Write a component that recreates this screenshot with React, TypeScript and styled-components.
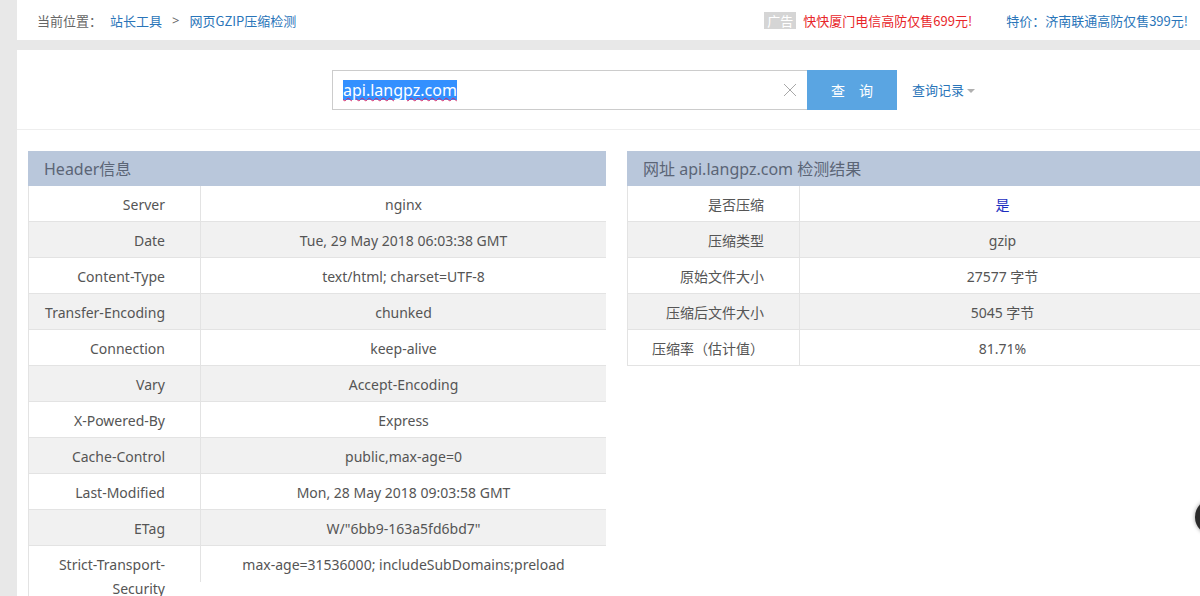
import React from "react";
import styled, { createGlobalStyle } from "styled-components";

const Global = createGlobalStyle`
  html, body { margin: 0; padding: 0; overflow: hidden; }
  body {
    background: #e8e8e8;
    font-family: "Noto Sans", "Noto Sans CJK SC", sans-serif;
    color: #555;
  }
`;

const Page = styled.div`
  padding-left: 17px;
  width: 1217px;
  height: 596px;
  box-sizing: border-box;
`;

const TopBar = styled.div`
  height: 40px;
  background: #fff;
  display: flex;
  align-items: center;
  padding: 0 29px 0 20px;
  font-size: 13px;
  font-family: "Noto Sans CJK SC", sans-serif;
`;

const Crumbs = styled.div`
  display: flex;
  align-items: center;
  flex: 1;
  color: #666;
`;

const CrumbLink = styled.a<{ $ml?: number }>`
  color: #2a75b9;
  text-decoration: none;
  margin-left: ${(p) => p.$ml ?? 0}px;
`;

const Sep = styled.span`
  color: #666;
  margin: 0 10px 0 10px;
  font-family: "Noto Sans", sans-serif;
`;

const Ads = styled.div`
  display: flex;
  align-items: center;
`;

const AdTag = styled.span`
  background: #d5d5d5;
  color: #fff;
  padding: 0 3px;
  line-height: 17px;
  margin-right: 7px;
`;

const AdLink = styled.a<{ $red?: boolean }>`
  color: ${(p) => (p.$red ? "#e8262a" : "#2a75b9")};
  text-decoration: none;
  margin-right: ${(p) => (p.$red ? 34 : 0)}px;
`;

const Main = styled.div`
  margin-top: 10px;
  background: #fff;
  height: 546px;
`;

const SearchArea = styled.div`
  height: 80px;
  border-bottom: 1px solid #eeeeee;
  display: flex;
  align-items: flex-start;
  padding: 20px 0 0 315px;
  box-sizing: border-box;
`;

const InputBox = styled.div`
  width: 475px;
  height: 40px;
  box-sizing: border-box;
  border: 1px solid #cccccc;
  border-right: none;
  display: flex;
  align-items: center;
  padding: 0 10px;
  font-size: 16px;
  font-family: "Noto Sans", "Noto Sans CJK SC", sans-serif;
`;

const Selected = styled.span`
  background: #3390ff;
  color: #fff;
  line-height: 20px;
  text-decoration: underline wavy #d0286a;
  text-decoration-thickness: 1px;
  text-underline-offset: 1px;
`;

const Spacer = styled.span`
  flex: 1;
`;

const SearchButton = styled.button`
  width: 90px;
  height: 40px;
  border: none;
  background: #5aa5e2;
  color: #fff;
  font-size: 14px;
  font-family: "Noto Sans CJK SC", sans-serif;
  letter-spacing: 14px;
  text-indent: 14px;
  padding: 0;
  cursor: pointer;
`;

const History = styled.a`
  margin-left: 15px;
  line-height: 40px;
  font-size: 13px;
  color: #2a75b9;
  font-family: "Noto Sans CJK SC", sans-serif;
  display: flex;
  align-items: center;
  gap: 3px;
  text-decoration: none;
`;

const Caret = styled.span`
  width: 0;
  height: 0;
  border-left: 4px solid transparent;
  border-right: 4px solid transparent;
  border-top: 4px solid #b0b0b0;
  margin-top: 1px;
`;

const Tables = styled.div`
  display: flex;
  align-items: flex-start;
  gap: 21px;
  padding: 21px 0 0 11px;
`;

const Panel = styled.div<{ $tail?: number }>`
  width: 578px;
  flex-shrink: 0;
  border-left: 1px solid #e3e3e3;
  box-sizing: border-box;
  padding-bottom: ${(p) => p.$tail ?? 0}px;
`;

const PanelHead = styled.div`
  height: 35px;
  margin-left: -1px;
  background: #b9c7db;
  color: #5b6576;
  font-size: 16px;
  line-height: 37px;
  padding-left: 16px;
  font-family: "Noto Sans", "Noto Sans CJK SC", sans-serif;
`;

const Row = styled.div<{ $alt: boolean; $last?: boolean }>`
  display: flex;
  height: 36px;
  box-sizing: border-box;
  border-bottom: ${(p) => (p.$last ? "none" : "1px solid #e3e3e3")};
  background: ${(p) => (p.$alt ? "#f1f1f1" : "#fff")};
  font-size: 14px;
  color: #555;
`;

const Key = styled.div`
  width: 172px;
  flex-shrink: 0;
  box-sizing: border-box;
  border-right: 1px solid #e3e3e3;
  text-align: right;
  padding: 7px 35px 0 10px;
  line-height: 24px;
  font-family: "Noto Sans", "Noto Sans CJK SC", sans-serif;
`;

const Val = styled.div<{ $blue?: boolean }>`
  flex: 1;
  text-align: center;
  padding-top: 7px;
  line-height: 24px;
  color: ${(p) => (p.$blue ? "#1c2ec0" : "#555")};
  font-family: "Noto Sans", "Noto Sans CJK SC", sans-serif;
`;

const Floater = styled.div`
  position: fixed;
  left: 1195px;
  top: 499px;
  width: 36px;
  height: 36px;
  border-radius: 50%;
  background: #2a2a2a;
  box-shadow: 0 0 4px rgba(0, 0, 0, 0.4);
`;

const headers: [string, string][] = [
  ["Server", "nginx"],
  ["Date", "Tue, 29 May 2018 06:03:38 GMT"],
  ["Content-Type", "text/html; charset=UTF-8"],
  ["Transfer-Encoding", "chunked"],
  ["Connection", "keep-alive"],
  ["Vary", "Accept-Encoding"],
  ["X-Powered-By", "Express"],
  ["Cache-Control", "public,max-age=0"],
  ["Last-Modified", "Mon, 28 May 2018 09:03:58 GMT"],
  ["ETag", 'W/"6bb9-163a5fd6bd7"'],
  ["Strict-Transport-Security", "max-age=31536000; includeSubDomains;preload"],
];

const results: [string, string][] = [
  ["是否压缩", "是"],
  ["压缩类型", "gzip"],
  ["原始文件大小", "27577 字节"],
  ["压缩后文件大小", "5045 字节"],
  ["压缩率（估计值）", "81.71%"],
];

export default function App() {
  return (
    <>
      <Global />
      <Page>
        <TopBar>
          <Crumbs>
            <span>当前位置：</span>
            <CrumbLink $ml={8}>站长工具</CrumbLink>
            <Sep>&gt;</Sep>
            <CrumbLink>网页GZIP压缩检测</CrumbLink>
          </Crumbs>
          <Ads>
            <AdTag>广告</AdTag>
            <AdLink $red>快快厦门电信高防仅售699元!</AdLink>
            <AdLink>特价：济南联通高防仅售399元!</AdLink>
          </Ads>
        </TopBar>
        <Main>
          <SearchArea>
            <InputBox>
              <Selected>api.langpz.com</Selected>
              <Spacer />
              <svg width="14" height="14" viewBox="0 0 14 14">
                <path d="M1 1 L13 13 M13 1 L1 13" stroke="#a8a8a8" strokeWidth="1" fill="none" />
              </svg>
            </InputBox>
            <SearchButton>查询</SearchButton>
            <History>
              查询记录
              <Caret />
            </History>
          </SearchArea>
          <Tables>
            <Panel $tail={40}>
              <PanelHead>Header信息</PanelHead>
              {headers.map(([k, v], i) => (
                <Row key={k} $alt={i % 2 === 1} $last={i === headers.length - 1}>
                  <Key>{k}</Key>
                  <Val>{v}</Val>
                </Row>
              ))}
            </Panel>
            <Panel>
              <PanelHead>网址 api.langpz.com 检测结果</PanelHead>
              {results.map(([k, v], i) => (
                <Row key={k} $alt={i % 2 === 1}>
                  <Key>{k}</Key>
                  <Val $blue={i === 0}>{v}</Val>
                </Row>
              ))}
            </Panel>
          </Tables>
        </Main>
      </Page>
      <Floater />
    </>
  );
}
